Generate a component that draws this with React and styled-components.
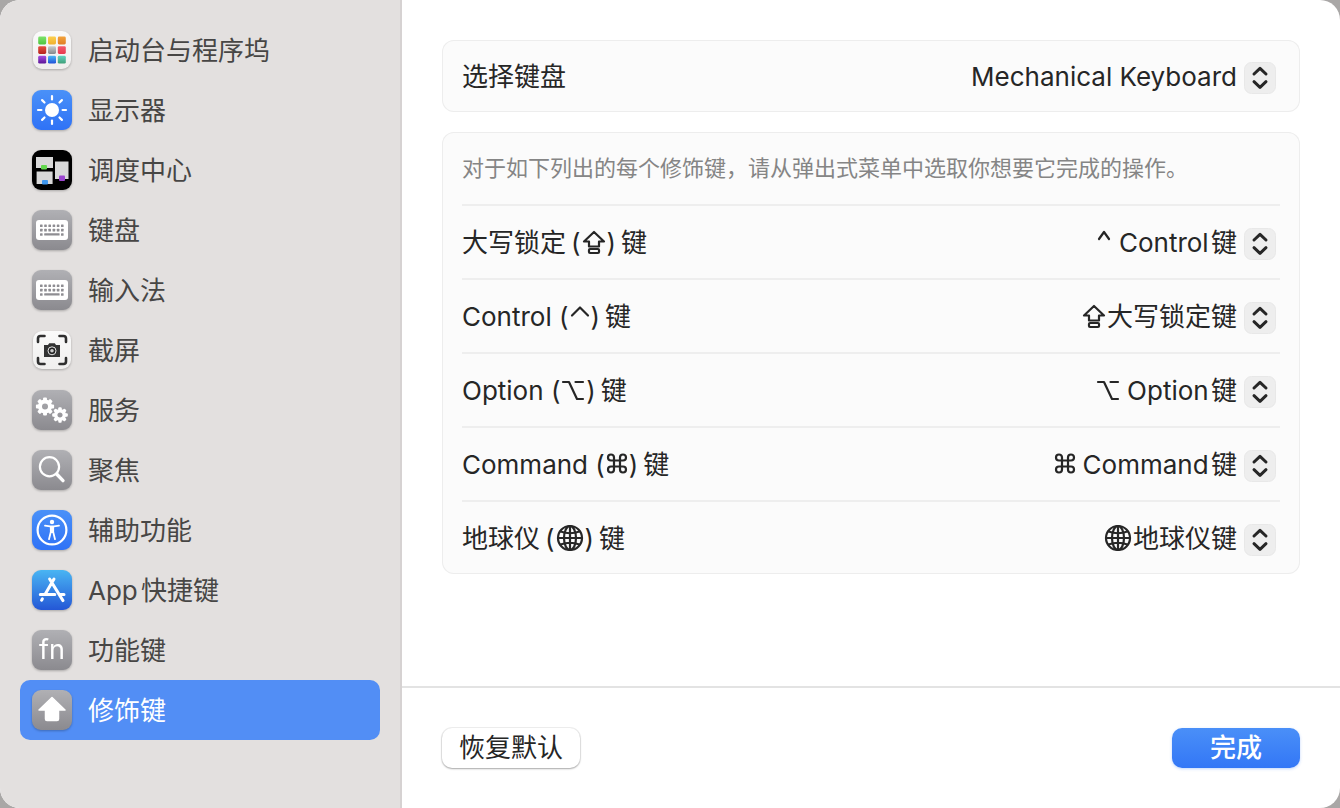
import React, { useState } from "react";
import styled, { createGlobalStyle } from "styled-components";

const GlobalStyle = createGlobalStyle`
  * { box-sizing: border-box; }
  body {
    margin: 0;
    background: #a9a7a6;
    font-family: Inter, "Noto Sans CJK SC", sans-serif;
    font-size: 26px;
    line-height: 36px;
    color: #262626;
    text-autospace: normal;
  }
  button, select { font: inherit; color: inherit; }
`;

const Window = styled.div`
  display: flex;
  min-height: 100vh;
  background: #fff;
  border-radius: 20px;
  overflow: hidden;
`;

const Sidebar = styled.nav`
  flex: none;
  width: 402px;
  padding: 20px;
  background: #e3e0df;
  border-right: 2px solid #d6d2d2;
`;

const NavList = styled.ul`
  list-style: none;
  margin: 0;
  padding: 0;
`;

const NavLink = styled.a`
  display: flex;
  align-items: center;
  gap: 16px;
  height: 60px;
  padding: 0 12px;
  border-radius: 10px;
  text-decoration: none;
  color: ${(p) => (p.$active ? "#fff" : "#474645")};
  background: ${(p) => (p.$active ? "#528ef5" : "transparent")};
`;

const NavText = styled.span`
  padding-top: 2px;
`;

const TileSvg = styled.svg`
  flex: none;
  width: 40px;
  height: 40px;
  overflow: visible;
  filter: drop-shadow(0 1px 1px rgba(0, 0, 0, 0.25));
`;

const Pane = styled.div`
  flex: 1;
  min-width: 0;
  display: flex;
  flex-direction: column;
`;

const Content = styled.main`
  flex: 1;
  display: flex;
  flex-direction: column;
  gap: 20px;
  padding: 40px 40px 20px;
`;

const Card = styled.section`
  padding: 0 20px;
  border-radius: 12px;
  background: #fbfbfb;
  box-shadow: inset 0 0 0 1px #ededed;
`;

const Row = styled.div`
  display: flex;
  align-items: center;
  justify-content: space-between;
  height: 72px;
  & + & { height: 74px; border-top: 2px solid #eeeeee; }
`;

const Note = styled.p`
  margin: 0;
  font-size: 22px;
  color: #858585;
`;

const KeyLabel = styled.label`
  display: block;
  padding-top: 2px;
  white-space: nowrap;
`;

const Parens = styled.span`
  margin: 0 5px 0 ${(p) => (p.$latin ? 0 : 5)}px;
`;

const Glyph = styled.svg`
  width: ${(p) => p.$w}px;
  height: 28px;
  margin: 0 1px;
  vertical-align: -4px;
  fill: none;
  stroke: currentColor;
  stroke-width: 2.2;
  stroke-linecap: round;
  stroke-linejoin: round;
`;

const Picker = styled.div`
  display: flex;
  align-items: center;
  padding-right: 4px;
  gap: ${(p) => p.$gap}px;
`;

const SelectBox = styled.div`
  display: grid;
  align-items: center;
  justify-items: end;
  & > * { grid-area: 1 / 1; }
`;

const Select = styled.select`
  appearance: none;
  field-sizing: content;
  border: 0;
  margin: 0;
  padding: 2px 39px 0 0;
  height: 40px;
  background: transparent;
  outline: none;
`;

const StepperSvg = styled.svg`
  width: 32px;
  height: 32px;
  margin-top: 4px;
  pointer-events: none;
`;

const Footer = styled.footer`
  display: flex;
  justify-content: space-between;
  padding: 40px;
  border-top: 2px solid #e3e3e3;
`;

const Button = styled.button`
  height: 40px;
  min-width: 128px;
  padding: 0 17px;
  border: 0;
  border-radius: 10px;
  color: ${(p) => (p.$primary ? "#fff" : "#262626")};
  font-weight: ${(p) => (p.$primary ? 500 : 400)};
  background: ${(p) => (p.$primary ? "linear-gradient(#4a8ff8, #3377f6)" : "#fff")};
  box-shadow: ${(p) =>
    p.$primary
      ? "0 1px 3px rgba(51, 119, 246, 0.3)"
      : "0 0 0 1px rgba(0, 0, 0, 0.06), 0 1px 2px rgba(0, 0, 0, 0.3)"};
`;

const GLYPH_WIDTH = { caps: 24, control: 20, controlSmall: 16, option: 24, command: 22, globe: 28 };

function KeyGlyph({ name }) {
  return (
    <Glyph $w={GLYPH_WIDTH[name]} viewBox={`0 0 ${GLYPH_WIDTH[name]} 28`} aria-hidden="true">
      {name === "caps" && (
        <>
          <path d="M12 4 L2 13.5 H7 V18.5 H17 V13.5 H22 Z" />
          <rect x="7" y="21" width="10" height="4" rx="1" />
        </>
      )}
      {name === "control" && <path d="M2 13.5 L10 5.5 L18 13.5" />}
      {name === "controlSmall" && <path d="M3 11 L8 4 L13 11" />}
      {name === "option" && <path d="M2 6 H8 L16 23 H22 M14.5 6 H22" />}
      {name === "command" && (
        <path d="M8 10 V7.500 A3 3 0 1 0 5 10.500 H17 A3 3 0 1 0 14 7.500 V19.500 A3 3 0 1 0 17 16.500 H5 A3 3 0 1 0 8 19.500 Z" />
      )}
      {name === "globe" && (
        <>
          <circle cx="14" cy="14" r="12" />
          <ellipse cx="14" cy="14" rx="6" ry="12" />
          <path d="M14 2 V26 M2 14 H26 M4.500 7.500 Q14 11 23.500 7.500 M4.500 20.500 Q14 17 23.500 20.500" />
        </>
      )}
    </Glyph>
  );
}

function Stepper() {
  return (
    <StepperSvg viewBox="0 0 32 32" aria-hidden="true">
      <rect x="0.5" y="0.5" width="31" height="31" rx="7" fill="#eeeeee" stroke="#e8e8e8" />
      <path d="M10 12 L16 6.3 L22 12 M10 19.7 L16 25.4 L22 19.7" fill="none" stroke="#262626" strokeWidth="3" strokeLinecap="round" strokeLinejoin="round" />
    </StepperSvg>
  );
}

function Cog({ cx, cy, r, hole }) {
  const teeth = [0, 45, 90, 135, 180, 225, 270, 315];
  return (
    <g transform={`translate(${cx} ${cy})`}>
      {teeth.map((a) => (
        <rect key={a} x={-r * 0.28} y={-r * 1.3} width={r * 0.56} height={r * 0.7} rx="1" fill="#fff" transform={`rotate(${a})`} />
      ))}
      <circle r={(r + hole) / 2} fill="none" stroke="#fff" strokeWidth={r - hole} />
    </g>
  );
}

function KeyboardArt() {
  const dots = [];
  for (let row = 0; row < 2; row += 1) {
    for (let col = 0; col < 6; col += 1) dots.push([8 + col * 4.2, 14.4 + row * 4.4]);
  }
  dots.push([8, 23.2], [29, 23.2]);
  return (
    <>
      <rect x="4" y="10" width="32" height="20" rx="3" fill="#fff" />
      {dots.map(([x, y]) => (
        <rect key={`${x}-${y}`} x={x} y={y} width="2.600" height="2.600" rx="0.500" fill="#8e8d92" />
      ))}
      <rect x="12.200" y="23.200" width="15.400" height="2.400" rx="0.500" fill="#8e8d92" />
    </>
  );
}

const LAUNCH_COLORS = [
  ["#7ce36a", "#4fc53f"], ["#fbcf4e", "#f0b02f"], ["#f2a23c", "#e07f25"],
  ["#e8503f", "#b5241d"], ["#c9ccce", "#85898c"], ["#f45a6c", "#e8394f"],
  ["#a84fe0", "#5a1496"], ["#4cb8f5", "#1f50d8"], ["#62d3c0", "#3f9f78"],
];

const TILE_FILL = {
  gray: ["#b0b0b4", "#8b8a8f"],
  blue: ["#4a91f8", "#2f72f6"],
  white: ["#fafafa", "#f0efee"],
  black: ["#000", "#000"],
  store: ["#49b5f3", "#2457d6"],
};

function Tile({ id, fill, children }) {
  const [from, to] = TILE_FILL[fill];
  const inset = fill === "white" ? 1 : 0;
  return (
    <TileSvg viewBox="0 0 40 40" aria-hidden="true">
      <defs>
        <linearGradient id={`tile-${id}`} x1="0" y1="0" x2="0" y2="1">
          <stop offset="0" stopColor={from} />
          <stop offset="1" stopColor={to} />
        </linearGradient>
      </defs>
      <rect x={inset} y={inset} width={40 - inset * 2} height={40 - inset * 2} rx="9" fill={`url(#tile-${id})`} />
      {children}
    </TileSvg>
  );
}

const ART = {
  launchpad: (
    <>
      {LAUNCH_COLORS.map(([from, to], i) => (
        <g key={from}>
          <linearGradient id={`lp-${i}`} x1="0" y1="0" x2="0" y2="1">
            <stop offset="0" stopColor={from} />
            <stop offset="1" stopColor={to} />
          </linearGradient>
          <rect x={6.2 + (i % 3) * 9.8} y={6.6 + Math.floor(i / 3) * 9.6} width="8" height="7.800" rx="1.400" fill={`url(#lp-${i})`} />
        </g>
      ))}
    </>
  ),
  display: (
    <>
      <circle cx="20" cy="20" r="7" fill="#fff" />
      <g stroke="#fff" strokeWidth="2.200" strokeLinecap="round">
        {[0, 45, 90, 135, 180, 225, 270, 315].map((a) => (
          <path key={a} d="M20 9.400 V6" transform={`rotate(${a} 20 20)`} />
        ))}
      </g>
    </>
  ),
  mission: (
    <>
      <rect x="4" y="7" width="17" height="11" fill="#d8d8d8" />
      <rect x="4.600" y="21.500" width="16" height="12.500" fill="#d8d8d8" />
      <rect x="23" y="11.500" width="13.500" height="17.500" fill="#d8d8d8" />
      <rect x="9" y="15" width="6" height="4.600" rx="1" fill="#62d84e" />
      <rect x="10" y="30" width="6" height="4.600" rx="1" fill="#3f97ee" />
      <rect x="27" y="25.500" width="6" height="5.500" rx="1" fill="#9b46cf" />
    </>
  ),
  keyboard: <KeyboardArt />,
  screenshot: (
    <>
      <path d="M6 12 V8.500 Q6 6 8.500 6 H12.500 M27.500 6 H31.500 Q34 6 34 8.500 V12 M34 28 V31.500 Q34 34 31.500 34 H27.500 M12.500 34 H8.500 Q6 34 6 31.500 V28" fill="none" stroke="#2f2f2f" strokeWidth="2.600" strokeLinecap="round" />
      <path d="M12 15 H16 L17.200 13.200 H22.800 L24 15 H28 V27 H12 Z" fill="#333" />
      <circle cx="20" cy="20.800" r="4" fill="#222" stroke="#e6e6e6" strokeWidth="1" />
      <circle cx="20" cy="20.800" r="1.800" fill="#ccc" />
    </>
  ),
  services: (
    <>
      <Cog cx={13} cy={16.5} r={7} hole={3} />
      <Cog cx={28} cy={25} r={6} hole={2.6} />
    </>
  ),
  spotlight: (
    <g fill="none" stroke="#fff" strokeLinecap="round">
      <circle cx="17.500" cy="16.800" r="9.600" strokeWidth="2.200" />
      <path d="M24.600 24 L31 30.600" strokeWidth="3.400" />
    </g>
  ),
  accessibility: (
    <>
      <circle cx="20" cy="20" r="14.400" fill="none" stroke="#fff" strokeWidth="2.200" />
      <circle cx="20" cy="12" r="2.200" fill="#fff" />
      <path d="M13 15.600 L18 16.400 H22 L27 15.600 M18.800 17 V22 L17 29.200 M21.200 17 V22 L23 29.200" fill="none" stroke="#fff" strokeWidth="1.800" strokeLinecap="round" strokeLinejoin="round" />
      <path d="M18 16 H22 V23 H18 Z" fill="#fff" />
    </>
  ),
  appstore: (
    <g fill="none" stroke="#fff" strokeWidth="3" strokeLinecap="round">
      <path d="M22 9 L13 24.400 M17.600 9 L31 30.600 M8.300 24.600 H22.800 M28 24.600 H32 M10.400 28.800 L9.600 30.200" />
    </g>
  ),
  fn: (
    <text x="20" y="29" textAnchor="middle" fontSize="27" fontWeight="400" fill="#fff">fn</text>
  ),
  modifier: (
    <path d="M20 7.500 L33 20 H26.500 V29 Q26.500 30.500 25 30.500 H15 Q13.500 30.500 13.500 29 V20 H7 Z" fill="#fff" stroke="#fff" strokeWidth="1.500" strokeLinejoin="round" />
  ),
};

const NAV = [
  ["launchpad", "启动台与程序坞", "white", "launchpad"],
  ["display", "显示器", "blue", "display"],
  ["mission", "调度中心", "black", "mission"],
  ["keyboard", "键盘", "gray", "keyboard"],
  ["input", "输入法", "gray", "keyboard"],
  ["screenshot", "截屏", "white", "screenshot"],
  ["services", "服务", "gray", "services"],
  ["spotlight", "聚焦", "gray", "spotlight"],
  ["accessibility", "辅助功能", "blue", "accessibility"],
  ["appstore", "App快捷键", "store", "appstore"],
  ["fn", "功能键", "gray", "fn"],
  ["modifier", "修饰键", "gray", "modifier"],
];

const KEYS = [
  { id: "caps", name: "大写锁定", glyph: "caps", value: "control" },
  { id: "control", name: "Control ", latin: true, glyph: "control", value: "caps" },
  { id: "option", name: "Option ", latin: true, glyph: "option", value: "option" },
  { id: "command", name: "Command ", latin: true, glyph: "command", value: "command" },
  { id: "globe", name: "地球仪", glyph: "globe", value: "globe" },
];

// Select text gets no automatic Latin/CJK spacing, so a hair space separates the scripts.
const ACTIONS = {
  caps: { text: "大写锁定键", glyph: "caps", gap: 0 },
  control: { text: "Control\u200A键", glyph: "controlSmall", gap: 6 },
  option: { text: "Option\u200A键", glyph: "option", gap: 6 },
  command: { text: "Command\u200A键", glyph: "command", gap: 6 },
  globe: { text: "地球仪键", glyph: "globe", gap: 0 },
};

function KeyRow({ item }) {
  const [value, setValue] = useState(item.value);
  const action = ACTIONS[value];
  return (
    <Row>
      <KeyLabel htmlFor={item.id}>
        {item.name}
        <Parens $latin={item.latin}>(<KeyGlyph name={item.glyph} />)</Parens>键
      </KeyLabel>
      <Picker $gap={action.gap}>
        <KeyGlyph name={action.glyph} />
        <SelectBox>
          <Select id={item.id} value={value} onChange={(e) => setValue(e.target.value)}>
            {Object.entries(ACTIONS).map(([key, a]) => (
              <option key={key} value={key}>{a.text}</option>
            ))}
          </Select>
          <Stepper />
        </SelectBox>
      </Picker>
    </Row>
  );
}

export default function App() {
  const [active, setActive] = useState("modifier");
  return (
    <>
      <GlobalStyle />
      <Window>
        <Sidebar>
          <NavList>
            {NAV.map(([id, label, fill, art]) => (
              <li key={id}>
                <NavLink href={`#${id}`} $active={active === id} onClick={() => setActive(id)}>
                  <Tile id={id} fill={fill}>{ART[art]}</Tile>
                  <NavText>{label}</NavText>
                </NavLink>
              </li>
            ))}
          </NavList>
        </Sidebar>
        <Pane>
          <Content>
            <Card>
              <Row>
                <KeyLabel htmlFor="device">选择键盘</KeyLabel>
                <Picker $gap={0}>
                  <SelectBox>
                    <Select id="device">
                      <option>Mechanical Keyboard</option>
                    </Select>
                    <Stepper />
                  </SelectBox>
                </Picker>
              </Row>
            </Card>
            <Card>
              <Row>
                <Note>对于如下列出的每个修饰键，请从弹出式菜单中选取你想要它完成的操作。</Note>
              </Row>
              {KEYS.map((item) => (
                <KeyRow key={item.id} item={item} />
              ))}
            </Card>
          </Content>
          <Footer>
            <Button type="button">恢复默认</Button>
            <Button type="button" $primary>完成</Button>
          </Footer>
        </Pane>
      </Window>
    </>
  );
}
